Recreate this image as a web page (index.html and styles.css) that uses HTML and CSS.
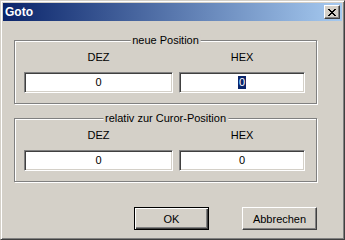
FILE: index.html
```html
<!DOCTYPE html>
<html>
<head>
<meta charset="utf-8">
<link rel="stylesheet" href="styles.css">
</head>
<body>
<div class="window">
  <div class="titlebar">
    <span class="title">Goto</span>
    <button class="close" type="button" aria-label="Schließen">
      <svg width="8" height="7" viewBox="0 0 8 7" shape-rendering="crispEdges"><path fill="#000" d="M0 0h2v1H0z M6 0h2v1H6z M1 1h2v1H1z M5 1h2v1H5z M2 2h4v1H2z M3 3h2v1H3z M2 4h4v1H2z M1 5h2v1H1z M5 5h2v1H5z M0 6h2v1H0z M6 6h2v1H6z"/></svg>
    </button>
  </div>
  <div class="client">
    <div class="group">
      <span class="legend">neue Position</span>
      <div class="fields">
        <div class="field"><span class="label">DEZ</span><div class="edit">0</div></div>
        <div class="field"><span class="label">HEX</span><div class="edit"><span class="sel">0</span></div></div>
      </div>
    </div>
    <div class="group group2">
      <span class="legend">relativ zur Curor-Position</span>
      <div class="fields">
        <div class="field"><span class="label">DEZ</span><div class="edit">0</div></div>
        <div class="field"><span class="label">HEX</span><div class="edit">0</div></div>
      </div>
    </div>
    <div class="buttons">
      <button class="btn default" type="button">OK</button>
      <button class="btn" type="button">Abbrechen</button>
    </div>
  </div>
</div>
</body>
</html>
```
FILE: styles.css
```css
html, body {
  margin: 0;
  padding: 0;
  background: #d4d0c8;
}
body {
  font-family: "Liberation Sans", Arial, sans-serif;
  font-size: 11px;
  color: #000;
  -webkit-font-smoothing: antialiased;
}
.window {
  box-sizing: border-box;
  width: 345px;
  height: 240px;
  background: #d4d0c8;
  border: 1px solid;
  border-color: #d4d0c8 #404040 #404040 #d4d0c8;
  box-shadow: inset 1px 1px #fff, inset -1px -1px #808080;
  padding: 2px;
  display: flex;
  flex-direction: column;
}
.titlebar {
  height: 18px;
  display: flex;
  align-items: center;
  justify-content: space-between;
  padding: 0 2px 0 2px;
  background: linear-gradient(to right, #0a246a, #a6caf0);
}
.title {
  color: #fff;
  font-weight: bold;
  font-size: 12px;
  line-height: 14px;
  padding-left: 0;
}
.close {
  box-sizing: border-box;
  width: 16px;
  height: 14px;
  padding: 0 0 0 3px;
  margin: 0;
  display: flex;
  align-items: center;
  justify-content: flex-start;
  background: #d4d0c8;
  border: 1px solid;
  border-color: #fff #404040 #404040 #fff;
  box-shadow: inset -1px -1px #808080;
}
.close svg { display: block; }
.client {
  padding: 19px 0 0 11px;
  display: flex;
  flex-direction: column;
  width: 303px;
}
.group {
  position: relative;
  box-sizing: border-box;
  width: 303px;
  border: 1px solid #808080;
  box-shadow: inset 1px 1px #fff, 1px 1px #fff;
  padding: 10px 11px 10px 9px;
}
.group2 {
  margin-top: 14px;
}
.legend {
  position: absolute;
  top: -7px;
  left: 50%;
  transform: translateX(-50%);
  background: #d4d0c8;
  padding: 0 2px;
  line-height: 13px;
  white-space: nowrap;
}
.fields {
  display: grid;
  grid-template-columns: 149px 126px;
  column-gap: 6px;
}
.field {
  display: flex;
  flex-direction: column;
  align-items: stretch;
}
.label {
  text-align: center;
  line-height: 13px;
  margin-bottom: 8px;
}
.edit {
  box-sizing: border-box;
  height: 21px;
  background: #fff;
  border: 1px solid;
  border-color: #808080 #fff #fff #808080;
  box-shadow: inset 1px 1px #404040, inset -1px -1px #d4d0c8;
  display: flex;
  align-items: center;
  justify-content: center;
  line-height: 13px;
  color: #000;
}
.sel {
  background: #0a246a;
  color: #fff;
  padding: 0 1px;
}
.buttons {
  margin-top: 25px;
  display: flex;
  justify-content: flex-end;
  gap: 33px;
}
.btn {
  box-sizing: border-box;
  width: 75px;
  height: 23px;
  margin: 0;
  padding: 0;
  font-family: "Liberation Sans", Arial, sans-serif;
  font-size: 11px;
  color: #000;
  background: #d4d0c8;
  border: 1px solid;
  border-color: #fff #404040 #404040 #fff;
  box-shadow: inset -1px -1px #808080;
}
.btn.default {
  border-color: #000;
  box-shadow: inset 1px 1px #fff, inset -1px -1px #404040, inset -2px -2px #808080;
}
```
